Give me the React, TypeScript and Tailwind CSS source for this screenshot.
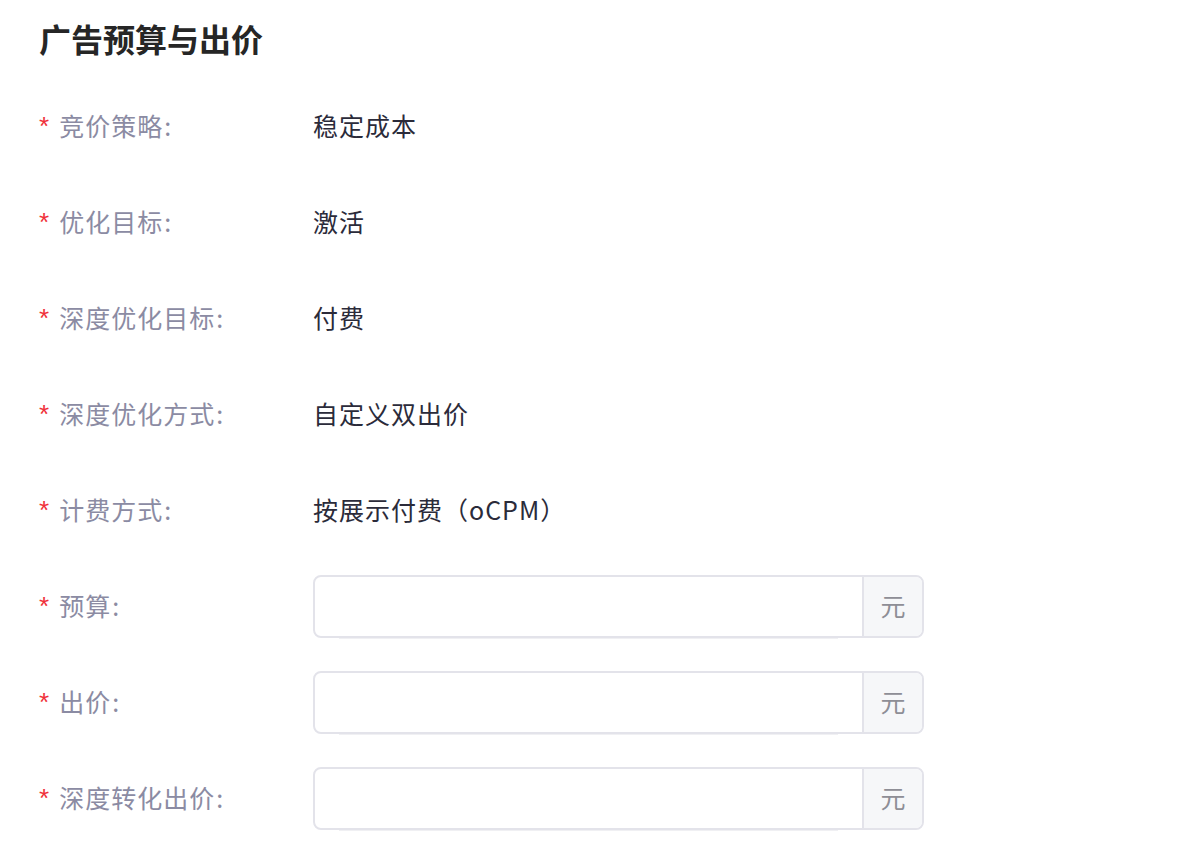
const FONT = { fontFamily: '"Noto Sans CJK SC", "Noto Sans", sans-serif' };

type Row = { label: string; value?: string; input?: boolean };

const rows: Row[] = [
  { label: '竞价策略', value: '稳定成本' },
  { label: '优化目标', value: '激活' },
  { label: '深度优化目标', value: '付费' },
  { label: '深度优化方式', value: '自定义双出价' },
  { label: '计费方式', value: '按展示付费（oCPM）' },
  { label: '预算', input: true },
  { label: '出价', input: true },
  { label: '深度转化出价', input: true }
];

function FormRow({ row }: { row: Row }) {
  return (
    <div className="flex h-[96px] items-center">
      <div className="flex w-[274px] shrink-0 items-center text-[25px] tracking-[1px] text-[#8b8ba3]">
        <span className="mr-[9px] text-[26px] text-[#f0313a]" style={{ fontFamily: '"Liberation Sans", sans-serif' }}>
          *
        </span>
        <span>{row.label}</span>
        <span className="ml-[1px]">:</span>
      </div>
      {row.input ? (
        <div className="relative flex h-[63px] w-[611px] rounded-[8px] border-2 border-[#e3e3ea] bg-white">
          <input className="min-w-0 flex-1 rounded-l-[8px] bg-transparent px-4 text-[24px] outline-none" type="text" />
          <div className="flex w-[60px] items-center justify-center rounded-r-[6px] border-l-2 border-[#e3e3ea] bg-[#f6f7f9] text-[25px] text-[#8e8e96]">
            元
          </div>
          <div className="absolute -bottom-[3px] left-[24px] right-[84px] h-[1px] bg-[#f0f0f3]" />
        </div>
      ) : (
        <div className="text-[25px] tracking-[1px] text-[#2b2b3a]">{row.value}</div>
      )}
    </div>
  );
}

export default function App() {
  return (
    <div className="min-h-screen bg-white pl-[39px] pt-[16px]" style={FONT}>
      <h2 className="mb-[18px] text-[32px] font-bold leading-[44px] text-[#262626]">广告预算与出价</h2>
      {rows.map((row) => (
        <FormRow key={row.label} row={row} />
      ))}
    </div>
  );
}
